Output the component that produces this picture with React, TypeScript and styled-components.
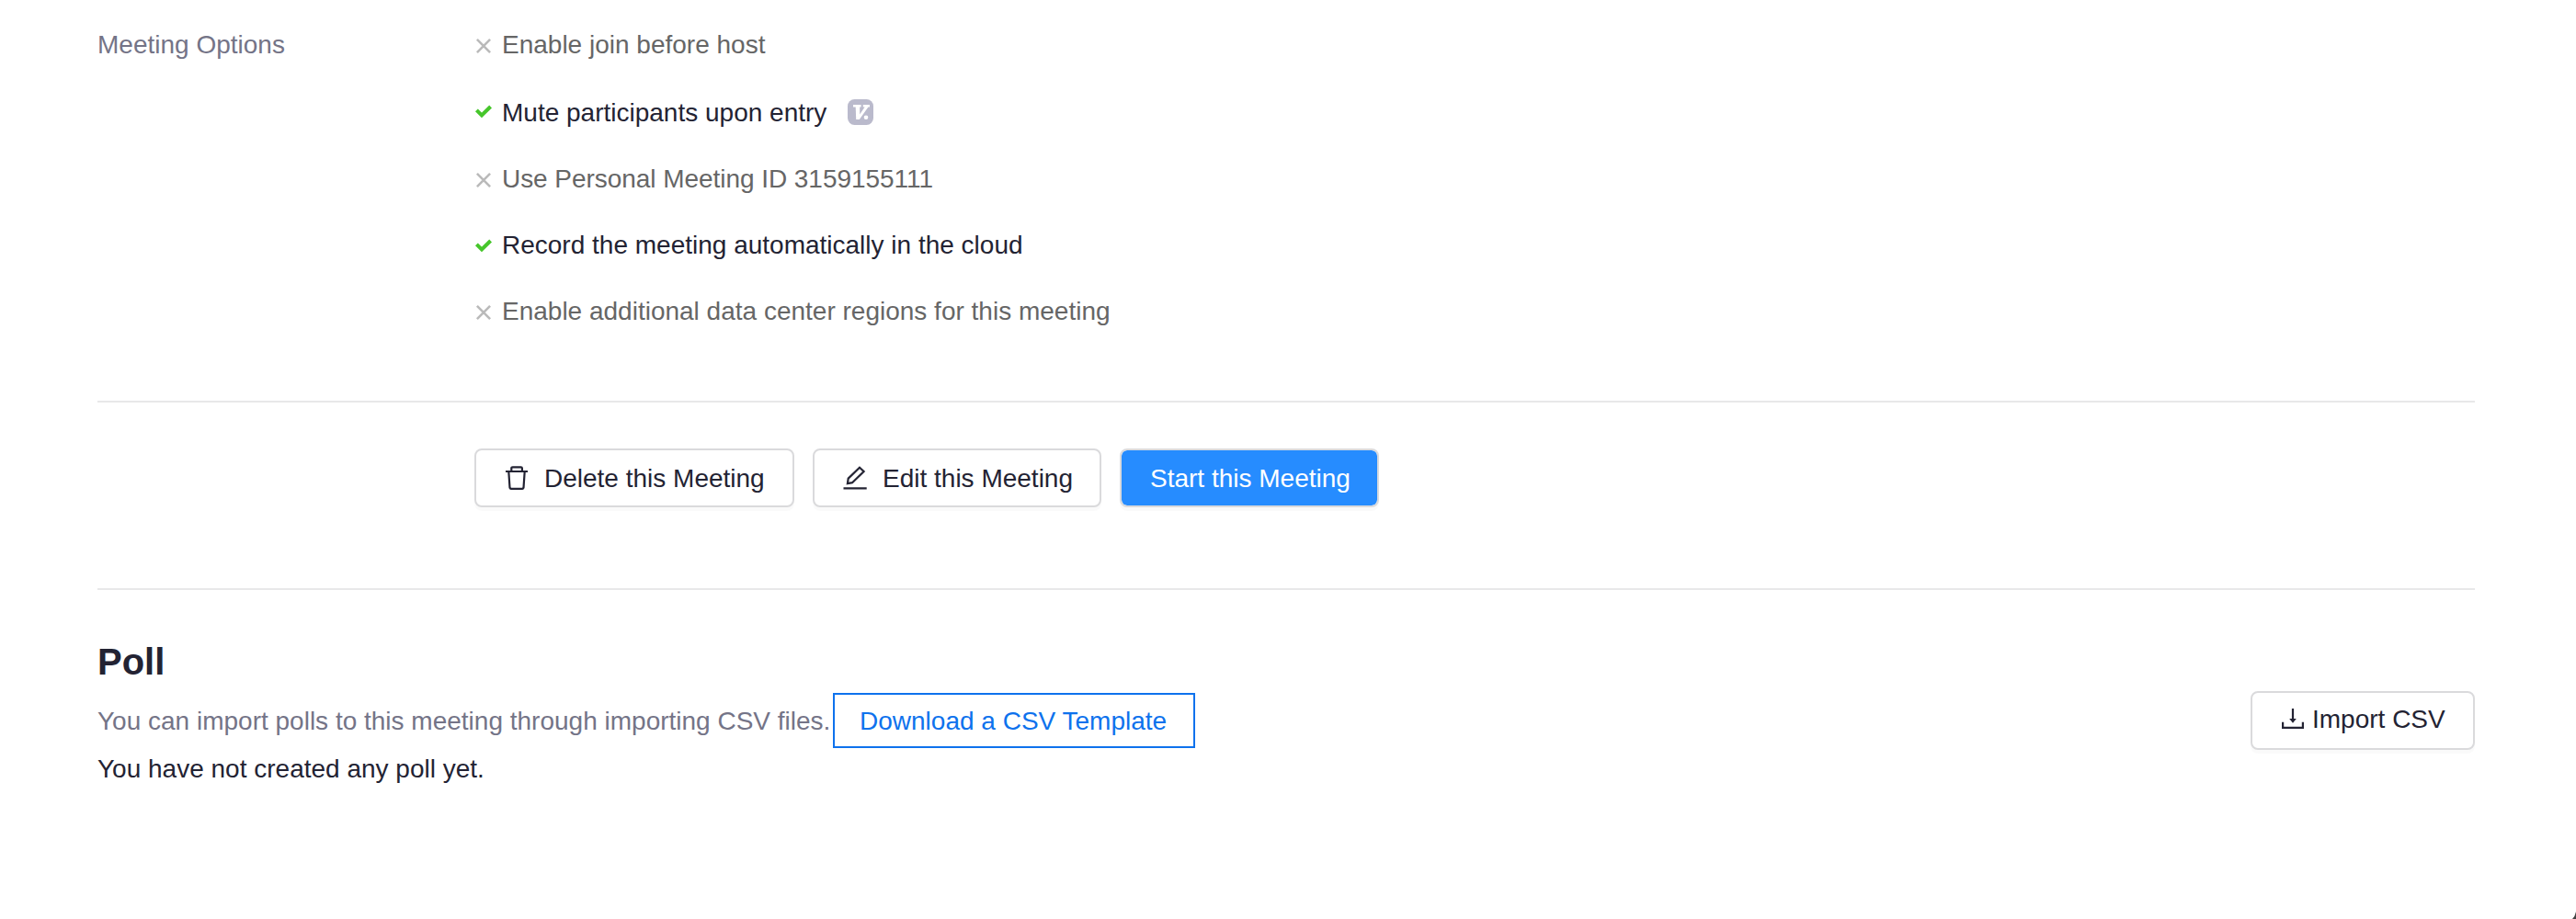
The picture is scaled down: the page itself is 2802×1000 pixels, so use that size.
import React from "react";
import styled, { createGlobalStyle } from "styled-components";

const GlobalStyle = createGlobalStyle`
  *, *::before, *::after { box-sizing: border-box; }
  body { margin: 0; background: #fff; overflow: hidden; }
`;

const Page = styled.main`
  position: relative;
  height: 1000px;
  padding: 33px 110px 0 106px;
  background: #fff;
  color: #232333;
  font: 28px/32px "Liberation Sans", Arial, sans-serif;
  overflow: hidden;
`;

const OptionsSection = styled.section`
  display: flex;
  height: 403px;
`;

const SectionLabel = styled.div`
  flex: 0 0 410px;
  color: #747487;
`;

const OptionList = styled.ul`
  margin: 0;
  padding: 0;
  list-style: none;
`;

const Option = styled.li<{ $on?: boolean; $gap?: number }>`
  display: flex;
  align-items: center;
  height: 32px;
  margin-bottom: ${(p) => p.$gap ?? 40}px;
  color: ${(p) => (p.$on ? "#232333" : "#666666")};
  white-space: nowrap;
`;

const StateIcon = styled.svg<{ $raised?: boolean }>`
  flex: none;
  width: 20px;
  height: 20px;
  margin: ${(p) => (p.$raised ? -2 : 2)}px 10px 0 0;
`;

const OptionText = styled.span<{ $track?: number }>`
  letter-spacing: ${(p) => p.$track ?? 0}px;
`;

const Badge = styled.svg`
  width: 28px;
  height: 28px;
  margin: -2px 0 0 23px;
`;

const Divider = styled.hr`
  height: 2px;
  margin: 0;
  border: 0;
  background: #e8e8e9;
`;

const Actions = styled.section`
  display: flex;
  gap: 20px;
  height: 202px;
  padding: 50px 0 0 410px;
`;

const Button = styled.button<{ $width: number; $primary?: boolean; $gap?: number }>`
  display: flex;
  align-items: center;
  gap: ${(p) => p.$gap ?? 16}px;
  width: ${(p) => p.$width}px;
  height: 64px;
  padding: 0 0 0 ${(p) => (p.$primary ? 31 : 30)}px;
  border: 2px solid #dadadc;
  border-radius: 8px;
  background: ${(p) => (p.$primary ? "#268cff" : "#fff")};
  background-clip: padding-box;
  box-shadow: 0 4px 0 rgba(0, 0, 0, 0.02);
  color: ${(p) => (p.$primary ? "#fff" : "#232333")};
  font: inherit;
  white-space: nowrap;
`;

const ButtonLabel = styled.span<{ $raised?: boolean }>`
  padding: ${(p) => (p.$raised ? "0 0 2px" : "2px 0 0")};
`;

const ButtonIcon = styled.svg`
  flex: none;
  width: 28px;
  height: 28px;
  fill: none;
  stroke: currentColor;
  stroke-width: 2.2;
`;

const PollTitle = styled.h2`
  margin: 58px 0 0;
  font-size: 40px;
  line-height: 40px;
  font-weight: 700;
`;

const PollRow = styled.div`
  display: flex;
  align-items: flex-start;
  height: 64px;
  margin-top: 12px;
`;

const PollHint = styled.p`
  width: 800px;
  margin: 17px 0 0;
  color: #747487;
  white-space: nowrap;
`;

const TemplateLink = styled.a`
  width: 394px;
  height: 60px;
  margin-top: 2px;
  padding: 13px 0 0 27px;
  border: 2px solid #0e72ed;
  color: #0e72ed;
  white-space: nowrap;
`;

const ImportSlot = styled.div`
  margin-left: auto;
`;

const PollEmpty = styled.p`
  margin: 5px 0 0;
`;

const WindowCorner = styled.svg`
  position: absolute;
  right: 0;
  bottom: 0;
  width: 4px;
  height: 8px;
`;

const CrossIcon = () => (
  <StateIcon viewBox="0 0 20 20">
    <path d="M2.9 2.9 17.1 17.1M17.1 2.9 2.9 17.1" fill="none" stroke="#bababa" strokeWidth="2.6" />
  </StateIcon>
);

const CheckIcon = ({ raised }: { raised?: boolean }) => (
  <StateIcon viewBox="0 0 20 20" $raised={raised}>
    <path d="M2.4 7.8 8 13.4 17.6 4" fill="none" stroke="#46c62b" strokeWidth="4" />
  </StateIcon>
);

const options = [
  { text: "Enable join before host", on: false, gap: 42 },
  { text: "Mute participants upon entry", on: true, badge: true },
  { text: "Use Personal Meeting ID 3159155111", on: false, track: -0.05 },
  { text: "Record the meeting automatically in the cloud", on: true },
  { text: "Enable additional data center regions for this meeting", on: false },
];

export default function App() {
  return (
    <>
      <GlobalStyle />
      <Page>
        <OptionsSection>
          <SectionLabel>Meeting Options</SectionLabel>
          <OptionList>
            {options.map((o) => (
              <Option key={o.text} $on={o.on} $gap={o.gap}>
                {o.on ? <CheckIcon raised={o.badge} /> : <CrossIcon />}
                <OptionText $track={o.track}>{o.text}</OptionText>
                {o.badge && (
                  <Badge viewBox="0 0 28 28">
                    <rect width="28" height="28" rx="7.5" fill="#babacc" />
                    <path
                      d="M6 6H14.6V8.4H13.2V16.4L18.6 8.4H16.8V6H24V8.4H22.4L12.8 22H9.2L8.7 8.4H6Z"
                      fill="#fff"
                    />
                    <circle cx="20" cy="19.8" r="2.3" fill="#fff" />
                  </Badge>
                )}
              </Option>
            ))}
          </OptionList>
        </OptionsSection>
        <Divider />
        <Actions>
          <Button $width={348}>
            <ButtonIcon viewBox="0 0 28 28">
              <path d="M2 7H26M8.3 7V3.6Q8.3 2.3 9.6 2.3H18.6Q19.9 2.3 19.9 3.6V7M5.3 7 6.5 24.7Q6.6 25.8 7.7 25.8H20.3Q21.4 25.8 21.5 24.7L22.7 7" />
            </ButtonIcon>
            <ButtonLabel>Delete this Meeting</ButtonLabel>
          </Button>
          <Button $width={314}>
            <ButtonIcon viewBox="0 0 28 28">
              <path d="M1.5 25.3H26.7M5.9 20.2 6.7 14.6 19 2.8 23.6 7 11 19.2Z" />
            </ButtonIcon>
            <ButtonLabel>Edit this Meeting</ButtonLabel>
          </Button>
          <Button $width={282} $primary>
            <ButtonLabel>Start this Meeting</ButtonLabel>
          </Button>
        </Actions>
        <Divider />
        <PollTitle>Poll</PollTitle>
        <PollRow>
          <PollHint>You can import polls to this meeting through importing CSV files.</PollHint>
          <TemplateLink>Download a CSV Template</TemplateLink>
          <ImportSlot>
            <Button $width={244} $gap={7}>
              <ButtonIcon viewBox="0 0 28 28">
                <path d="M3.1 15.7V21.9H24.9V15.7M14 1V13" />
                <path d="M10.2 12H17.8L14 16.7Z" fill="currentColor" stroke="none" />
              </ButtonIcon>
              <ButtonLabel $raised>Import CSV</ButtonLabel>
            </Button>
          </ImportSlot>
        </PollRow>
        <PollEmpty>You have not created any poll yet.</PollEmpty>
        <WindowCorner viewBox="0 0 4 8">
          <path d="M4 0V8H0Q3 5 4 0Z" fill="#444" />
        </WindowCorner>
      </Page>
    </>
  );
}
